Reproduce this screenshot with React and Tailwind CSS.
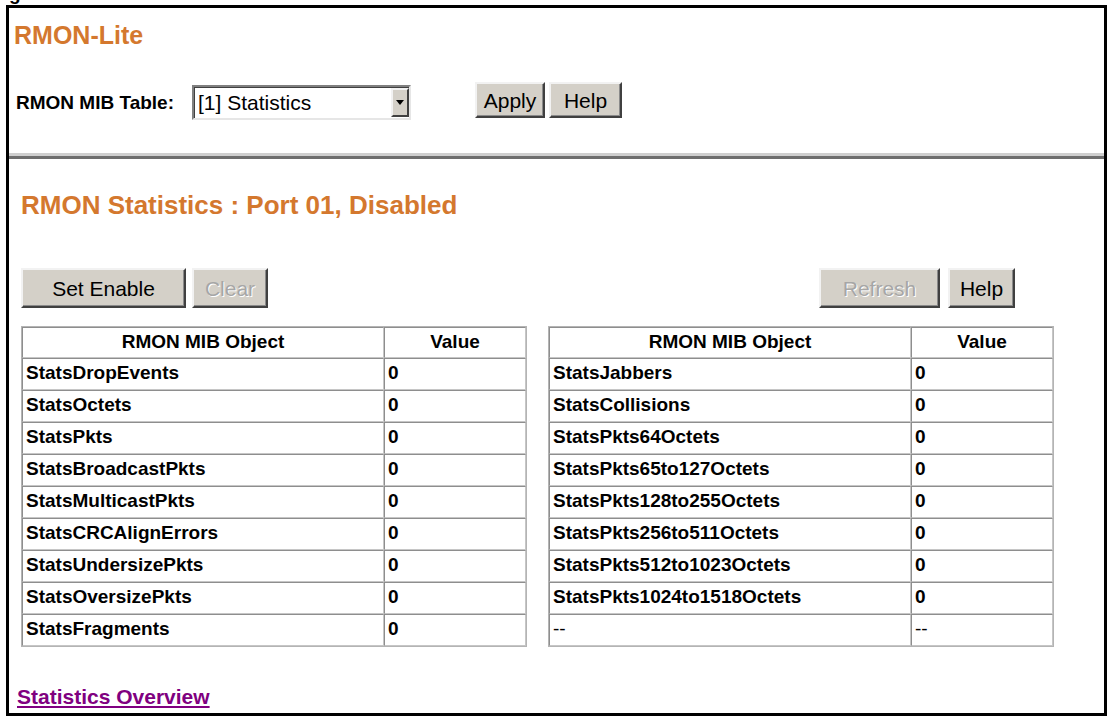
import React from "react";

const leftRows = [
  ["StatsDropEvents", "0"],
  ["StatsOctets", "0"],
  ["StatsPkts", "0"],
  ["StatsBroadcastPkts", "0"],
  ["StatsMulticastPkts", "0"],
  ["StatsCRCAlignErrors", "0"],
  ["StatsUndersizePkts", "0"],
  ["StatsOversizePkts", "0"],
  ["StatsFragments", "0"],
];

const rightRows = [
  ["StatsJabbers", "0"],
  ["StatsCollisions", "0"],
  ["StatsPkts64Octets", "0"],
  ["StatsPkts65to127Octets", "0"],
  ["StatsPkts128to255Octets", "0"],
  ["StatsPkts256to511Octets", "0"],
  ["StatsPkts512to1023Octets", "0"],
  ["StatsPkts1024to1518Octets", "0"],
  ["--", "--"],
];

function Btn({ children, disabled, className = "" }) {
  return (
    <div
      className={`flex items-center justify-center bg-[#d4d0c8] border-2 border-t-[#f2f2f2] border-l-[#f2f2f2] border-r-[#404040] border-b-[#404040] shadow-[inset_-1px_-1px_0_#8a8a8a] text-[21px] leading-none ${
        disabled ? "text-[#a6a6a6] [text-shadow:1px_1px_0_#ffffff]" : "text-black"
      } ${className}`}
    >
      {children}
    </div>
  );
}

const cell =
  "border border-t-[#8e8e8e] border-l-[#8e8e8e] border-r-[#c6c6c6] border-b-[#c6c6c6] px-[3px] text-[19px] font-bold text-black whitespace-nowrap";

function StatTable({ rows }) {
  return (
    <table className="w-[506px] table-fixed border-separate border-spacing-0 border border-[#b4b4b4]">
      <colgroup>
        <col className="w-[362px]" />
        <col />
      </colgroup>
      <thead>
        <tr>
          <th className={`${cell} h-[30px] text-center`}>RMON MIB Object</th>
          <th className={`${cell} h-[30px] text-center`}>Value</th>
        </tr>
      </thead>
      <tbody>
        {rows.map(([k, v], i) => (
          <tr key={i}>
            <td className={`${cell} h-[32px] text-left ${k === "--" ? "font-normal" : ""}`}>{k}</td>
            <td className={`${cell} h-[32px] text-left ${v === "--" ? "font-normal" : ""}`}>{v}</td>
          </tr>
        ))}
      </tbody>
    </table>
  );
}

export default function App() {
  return (
    <div className="relative w-[1109px] h-[720px] bg-white overflow-hidden font-['Liberation_Sans',Arial,sans-serif] text-black">
      <span className="absolute left-[9px] top-[-16px] text-[19px] font-bold leading-none text-black">g</span>
      <div className="pt-[5px] pl-[6px]">
        <div className="w-[1101px] h-[711px] border-[3px] border-black flex flex-col">
          {/* top section */}
          <div className="pl-[5px]">
            <div className="mt-[12px] text-[25px] leading-[30px] font-bold text-[#d4782e]">RMON-Lite</div>
            <div className="mt-[32px] flex items-start h-[36px]">
              <div className="ml-[2px] mt-[10px] text-[19px] leading-[22px] font-bold w-[176px]">RMON MIB Table:</div>
              <div className="ml-[0px] mt-[3px] w-[219px] h-[35px] flex items-center justify-between border-2 border-t-[#808080] border-l-[#808080] border-r-[#e6e6e6] border-b-[#e6e6e6] shadow-[inset_1px_1px_0_#404040] bg-white">
                <span className="pl-[4px] text-[21px] leading-none">[1] Statistics</span>
                <div className="w-[18px] h-[29px] mr-[0px] flex items-center justify-center bg-[#d4d0c8] border-2 border-t-[#f2f2f2] border-l-[#f2f2f2] border-r-[#404040] border-b-[#404040]">
                  <svg width="8" height="5" viewBox="0 0 8 5">
                    <path d="M0 0 L8 0 L4 5 Z" fill="#000" />
                  </svg>
                </div>
              </div>
              <Btn className="ml-[64px] w-[70px] h-[36px]">Apply</Btn>
              <Btn className="ml-[4px] w-[73px] h-[36px]">Help</Btn>
            </div>
          </div>
          {/* separator */}
          <div className="mt-[35px] h-[3px] bg-[#cfcfcf]" />
          <div className="h-[3px] bg-[#6e6e6e]" />
          {/* stats section */}
          <div className="pl-[12px]">
            <div className="mt-[31px] text-[26px] leading-[30px] font-bold text-[#d4782e] whitespace-nowrap">
              RMON Statistics : Port 01, Disabled
            </div>
            <div className="mt-[48px] flex justify-between pr-[89px]">
              <div className="flex gap-[6px]">
                <Btn className="w-[165px] h-[40px]">Set Enable</Btn>
                <Btn disabled className="w-[76px] h-[40px]">Clear</Btn>
              </div>
              <div className="flex gap-[8px]">
                <Btn disabled className="w-[121px] h-[40px]">Refresh</Btn>
                <Btn className="w-[67px] h-[40px]">Help</Btn>
              </div>
            </div>
            <div className="mt-[18px] flex gap-[21px]">
              <StatTable rows={leftRows} />
              <StatTable rows={rightRows} />
            </div>
            <div className="mt-[38px] -ml-[4px]">
              <a className="text-[21px] leading-[24px] font-bold text-[#800080] underline underline-offset-2 cursor-pointer">
                Statistics Overview
              </a>
            </div>
          </div>
        </div>
      </div>
    </div>
  );
}
